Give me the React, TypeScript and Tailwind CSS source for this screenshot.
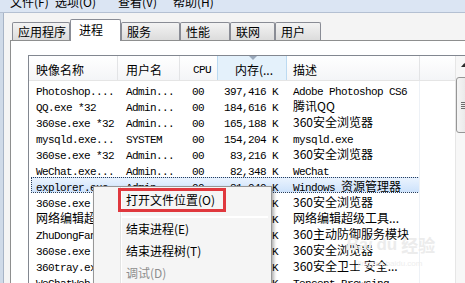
import React from "react";

const mono = "font-['Liberation_Mono',monospace] text-[11px] tracking-[-0.6px]";
const cjk = "font-['Noto_Sans_CJK_SC',sans-serif] text-[12px]";
const HAN = /[\u4e00-\u9fff]/;

// picks the font per run, the way the old list view renders mixed strings
function Txt({ s }: { s: string }) {
  if (!HAN.test(s)) return <span className={mono}>{s}</span>;
  if (!/^[A-Za-z]/.test(s)) return <span className={cjk}>{s}</span>;
  const parts = s.split(/([\u4e00-\u9fff]+)/).filter(Boolean);
  return (
    <>
      {parts.map((p, i) => (
        <span key={i} className={HAN.test(p) ? cjk : mono}>{p}</span>
      ))}
    </>
  );
}

const rows: string[][] = [
  ["Photoshop....", "Admin...", "00", "397,416 K", "Adobe Photoshop CS6"],
  ["QQ.exe *32", "Admin...", "00", "184,616 K", "腾讯QQ"],
  ["360se.exe *32", "Admin...", "00", "165,188 K", "360安全浏览器"],
  ["mysqld.exe...", "SYSTEM", "00", "154,204 K", "mysqld.exe"],
  ["360se.exe *32", "Admin...", "00", "83,216 K", "360安全浏览器"],
  ["WeChat.exe...", "Admin...", "00", "82,348 K", "WeChat"],
  ["explorer.exe", "Admin...", "00", "81,040 K", "Windows 资源管理器"],
  ["360se.exe *32", "Admin...", "00", "74,512 K", "360安全浏览器"],
  ["网络编辑超级...", "Admin...", "00", "61,280 K", "网络编辑超级工具..."],
  ["ZhuDongFang...", "SYSTEM", "00", "52,904 K", "360主动防御服务模块"],
  ["360se.exe *32", "Admin...", "00", "48,736 K", "360安全浏览器"],
  ["360tray.exe...", "Admin...", "00", "40,152 K", "360安全卫士 安全..."],
  ["WeChatWeb.exe", "Admin...", "00", "36,880 K", "Tencent Browsing ..."],
];

const tabs = [
  { label: "应用程序", w: "w-[58px]" },
  { label: "进程", w: "w-[51px]", active: true },
  { label: "服务", w: "w-[59px]" },
  { label: "性能", w: "w-[50px]" },
  { label: "联网", w: "w-[45px]" },
  { label: "用户", w: "w-[46px]" },
];

function Row({ r, selected }: { r: string[]; selected?: boolean }) {
  return (
    <div className="relative flex h-[16px] leading-[16px] text-black whitespace-nowrap">
      {selected && (
        <div className="absolute left-[2px] top-0 h-[16px] w-[389px] border border-dotted border-[#2a3f5c] bg-gradient-to-b from-[#eaf3fe] to-[#cde2fb]" />
      )}
      <div className="relative w-[89px] pl-[7px] overflow-hidden"><Txt s={r[0]} /></div>
      <div className="relative w-[62px] pl-[8px] overflow-hidden"><Txt s={r[1]} /></div>
      <div className="relative w-[37px] pl-[12px] overflow-hidden"><Txt s={r[2]} /></div>
      <div className="relative w-[70px] pr-[9px] text-right overflow-hidden"><Txt s={r[3]} /></div>
      <div className="relative w-[133px] pl-[6px] overflow-hidden border-r border-[#edf1f6]"><Txt s={r[4]} /></div>
      <div className="w-[35px]" />
    </div>
  );
}

export default function App() {
  return (
    <div className="relative w-[465px] h-[283px] overflow-hidden bg-[#f0f0f0] flex flex-col">
      {/* menu bar, scrolled off the top */}
      <div className="h-[13px] shrink-0 overflow-hidden bg-[#dbe5f3] border-b border-[#b4c0d2] flex pl-[10px] text-black">
        {["文件(F)", "选项(O)", "查看(V)", "帮助(H)"].map((m, i) => (
          <span key={m} className={`${cjk} leading-[16px] -mt-[6px] ${i === 0 ? "w-[45px]" : i === 1 ? "w-[63px]" : "w-[55px]"}`}>{m}</span>
        ))}
      </div>

      <div className="flex flex-1 min-h-0">
        <div className="w-[4px] shrink-0 bg-[#cfdae8] border-r border-[#a7b4c6]" />
        <div className="flex flex-col flex-1 min-w-0 bg-[#f4f4f4]">
          {/* tabs */}
          <div className="h-[27px] shrink-0 flex items-end pl-[8px]">
            {tabs.map((t) =>
              t.active ? (
                <div key={t.label} className={`${t.w} relative z-10 h-[22px] -mb-[1px] bg-white border border-b-0 border-[#898c95] rounded-t-[2px] flex items-center pl-[8px] pb-[2px] ${cjk} text-black`}>
                  {t.label}
                </div>
              ) : (
                <div key={t.label} className={`${t.w} h-[18px] bg-gradient-to-b from-[#f3f3f3] to-[#dcdcdc] border border-b-0 border-[#898c95] rounded-t-[2px] flex items-center pl-[5px] ${cjk} text-black`}>
                  {t.label}
                </div>
              )
            )}
          </div>

          {/* tab page */}
          <div className="ml-[6px] flex-1 bg-white border-t border-l border-[#8e8f8f] pt-[14px] pl-[17px]">
            <div className="flex w-[460px] h-[240px] border-t border-l border-[#828790] bg-white">
              <div className="w-[426px] shrink-0">
                {/* header */}
                <div className="flex h-[25px] border-b border-[#e5e5e5] bg-gradient-to-b from-white to-[#f4f5f7] text-black">
                  <div className={`w-[89px] pl-[7px] pt-[4px] flex items-center border-r border-[#e3e4e6] ${cjk}`}>映像名称</div>
                  <div className={`w-[62px] pl-[8px] pt-[4px] flex items-center border-r border-[#e3e4e6] ${cjk}`}>用户名</div>
                  <div className={`w-[37px] pl-[13px] pt-[4px] flex items-center ${mono}`}>CPU</div>
                  <div className={`relative w-[70px] pr-[13px] pt-[4px] flex items-center justify-end bg-[#e4f1fb] border-x border-[#bcdaf1] ${cjk}`}>
                    <svg className="absolute left-[31px] top-0" width="8" height="5" viewBox="0 0 8 5">
                      <path d="M0 0 L8 0 L4 4 Z" fill="#9aa9bb" />
                    </svg>
                    内存(...
                  </div>
                  <div className={`w-[133px] pl-[6px] pt-[4px] flex items-center border-r border-[#e3e4e6] ${cjk}`}>描述</div>
                  <div className="w-[35px]" />
                </div>
                {rows.map((r, i) => (
                  <Row key={i} r={r} selected={i === 6} />
                ))}
              </div>

              {/* vertical scrollbar */}
              <div className="w-[17px] shrink-0 bg-[#f7f7f7] border-l border-[#e6e6e6] flex flex-col items-start">
                <div className="h-[18px] w-full flex items-center pl-[5px]">
                  <svg width="7" height="4" viewBox="0 0 7 4">
                    <path d="M0 4 L3.5 0 L7 4 Z" fill="#2b2b2b" />
                  </svg>
                </div>
                <div className="mt-[3px] ml-0 h-[56px] w-[16px] rounded-[3px] border border-[#969696] bg-gradient-to-r from-[#f5f5f5] to-[#e2e2e2] flex flex-col justify-center gap-[1px] pl-[4px]">
                  <div className="h-px w-[7px] bg-[#6d6d6d]" />
                  <div className="h-px w-[7px] bg-[#6d6d6d]" />
                  <div className="h-px w-[7px] bg-[#6d6d6d]" />
                  <div className="h-px w-[7px] bg-[#6d6d6d]" />
                </div>
              </div>
            </div>
          </div>
        </div>
      </div>

      {/* watermark */}
      <div className="absolute left-[346px] top-[236px] flex items-end gap-[4px] text-[#ececec] pointer-events-none">
        <span className="font-['Liberation_Sans',sans-serif] text-[17px] font-bold italic leading-none">Bai</span>
        <span className="font-['Liberation_Sans',sans-serif] text-[17px] font-bold leading-none">du</span>
        <span className="font-['Noto_Sans_CJK_SC',sans-serif] text-[17px] font-bold leading-none">经验</span>
      </div>
      <div className="absolute left-[358px] top-[258px] font-['Liberation_Sans',sans-serif] text-[8px] text-[#eeeeee] pointer-events-none">
        jingyan.baidu.com
      </div>

      {/* context menu */}
      <div className="absolute left-[93px] top-[186px] w-[179px] h-[120px] bg-[#f5f5f5] border border-[#979797] shadow-[2px_2px_3px_rgba(0,0,0,0.3)] flex">
        <div className="w-[27px] shrink-0 border-r border-[#e2e3e3] shadow-[1px_0_0_#ffffff]" />
        <div className="flex-1 pt-[2px] pl-[5px] pr-[3px]">
          <div className={`h-[22px] flex items-center ${cjk} text-black`}>打开文件位置(O)</div>
          <div className="h-[7px] pt-[5px] -ml-[4px]">
            <div className="h-[2px] border-t border-[#e0e0e0] border-b border-white" />
          </div>
          <div className={`h-[22px] flex items-center ${cjk} text-black`}>结束进程(E)</div>
          <div className={`h-[22px] flex items-center ${cjk} text-black`}>结束进程树(T)</div>
          <div className={`h-[22px] flex items-center ${cjk} text-[#8d8d8d]`}>调试(D)</div>
        </div>
      </div>

      {/* red highlight annotation */}
      <div className="absolute left-[118px] top-[188px] w-[108px] h-[24px] border-[3px] border-[#e0383e]" />
    </div>
  );
}
